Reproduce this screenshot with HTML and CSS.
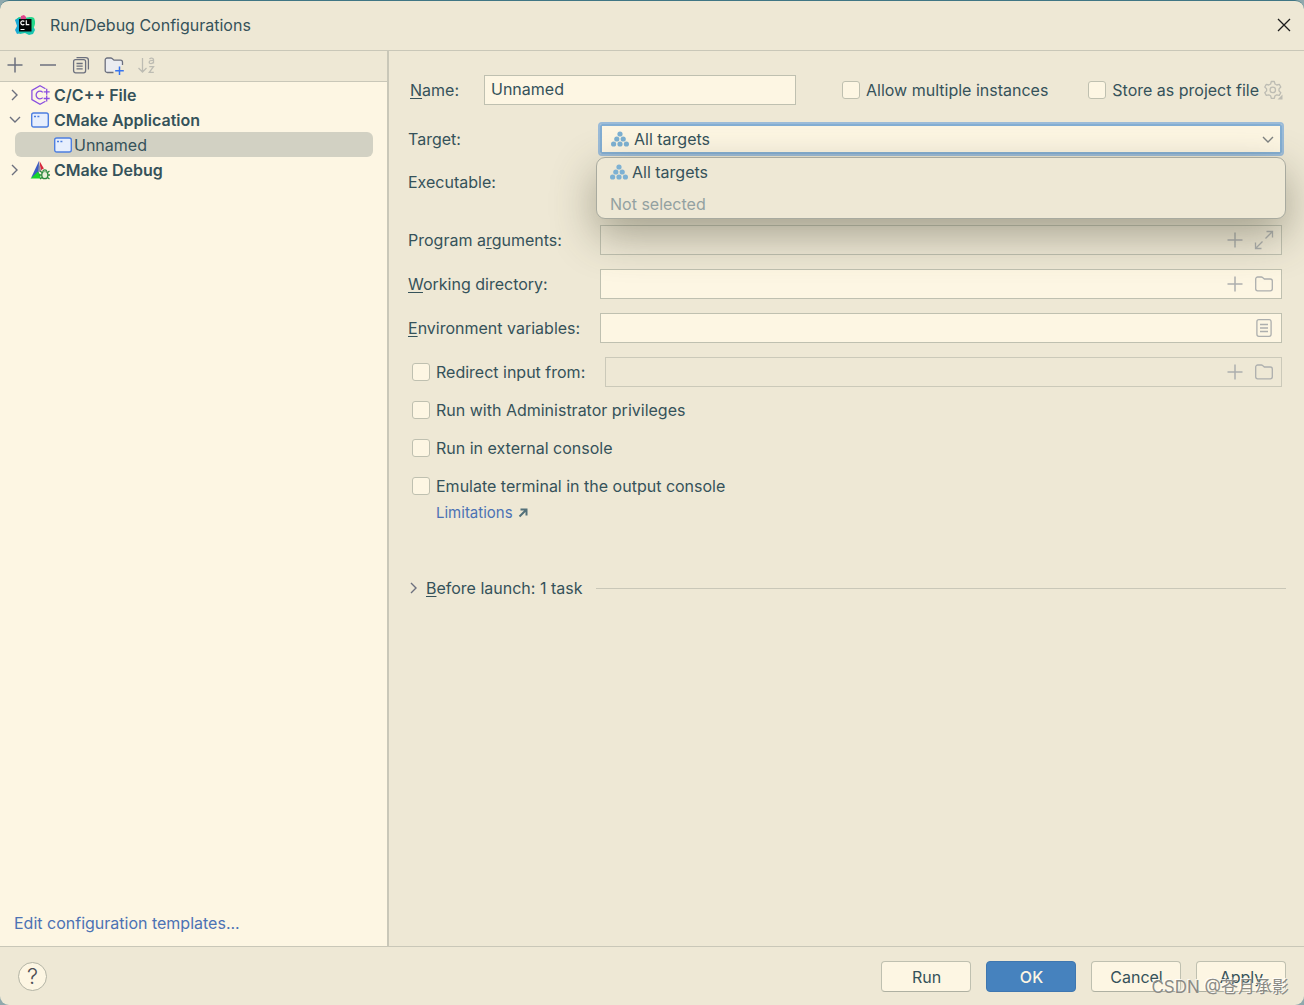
FILE: index.html
```html
<!DOCTYPE html>
<html lang="en">
<head>
<meta charset="utf-8">
<title>Run/Debug Configurations</title>
<link rel="stylesheet" href="styles.css">
</head>
<body>
<svg class="defs" aria-hidden="true">
  <symbol id="plus" viewBox="0 0 20 20"><path d="M10 2.500v15M2.500 10h15" fill="none" stroke="currentColor" stroke-width="1.500"/></symbol>
  <symbol id="folder" viewBox="0 0 20 20"><path d="M1.700 5a2 2 0 0 1 2-2h3.600a2 2 0 0 1 1.300.5L10.400 5h5.900a2 2 0 0 1 2 2v7.800a2 2 0 0 1-2 2H3.700a2 2 0 0 1-2-2z" fill="none" stroke="currentColor" stroke-width="1.300"/></symbol>
  <symbol id="chevron" viewBox="0 0 16 16"><path d="M5 3l5 5-5 5" fill="none" stroke="currentColor" stroke-width="1.400"/></symbol>
  <symbol id="window" viewBox="0 0 20 20"><rect x="1.700" y="3" width="16.600" height="14" rx="2" fill="#e7effd" stroke="#4e7fe0" stroke-width="1.400"/><path d="M4 6.500h2M7.400 6.500h2" stroke="#4e7fe0" stroke-width="1.500"/></symbol>
  <symbol id="targets" viewBox="0 0 20 20"><g fill="#7db1d3"><circle cx="10" cy="5" r="2.600"/><circle cx="6.800" cy="10" r="2.600"/><circle cx="13.200" cy="10" r="2.600"/><circle cx="3.600" cy="15" r="2.600"/><circle cx="10" cy="15" r="2.600"/><circle cx="16.400" cy="15" r="2.600"/></g></symbol>
</svg>
<div class="dialog">
  <header class="titlebar">
    <svg class="logo" viewBox="0 0 20 20">
      <path d="M0 5l4-3 5 1 6-1 4 1 1 4-1 5-9 1z" fill="#1fd08c"/>
      <path d="M6 1l3-1 2 2 0 4-6 1z" fill="#e0458c"/>
      <path d="M0 5l4-2 3 9-1 6-4 1-2-4 2-4z" fill="#19a9d6"/>
      <path d="M3 17l14-9 3 7-2 4-4 1-4-2-5 1z" fill="#18c5b0"/>
      <path d="M16 2l3 1 1 5-1 4-3 3z" fill="#25d88a"/>
      <rect x="4" y="4" width="12.500" height="12.500" fill="#050708"/>
      <path d="M9.300 6.500a2 2 0 1 0 0 2.600M11.300 5.200v4.500h3M5.500 14.500h4" fill="none" stroke="#fff" stroke-width="1.200"/>
    </svg>
    <h1 class="title">Run/Debug Configurations</h1>
    <button class="icon-button close" aria-label="Close"><svg viewBox="0 0 16 16"><path d="M2 2l12 12M14 2L2 14" fill="none" stroke="#1c1c1c" stroke-width="1.300"/></svg></button>
  </header>
  <div class="content">
    <aside class="sidebar">
      <div class="toolbar">
        <button class="icon-button" aria-label="Add"><svg class="icon"><use href="#plus"/></svg></button>
        <button class="icon-button" aria-label="Remove"><svg class="icon" viewBox="0 0 20 20"><path d="M2 10h16" stroke="currentColor" stroke-width="1.500"/></svg></button>
        <button class="icon-button" aria-label="Copy"><svg class="icon" viewBox="0 0 20 20" fill="none" stroke="currentColor" stroke-width="1.300"><path d="M5.500 2.600h9.300a2.600 2.600 0 0 1 2.600 2.600v9.300"/><rect x="2.600" y="4.600" width="12" height="13.200" rx="2"/><path d="M5.500 8.500h6.200M5.500 11.200h6.200M5.500 13.900h6.200"/></svg></button>
        <button class="icon-button" aria-label="New folder"><svg class="icon" viewBox="0 0 20 20"><path d="M9.500 17.500H3.200a2 2 0 0 1-2-2V5a2 2 0 0 1 2-2h3.600a2 2 0 0 1 1.300.5L10 5.200h6.500a2 2 0 0 1 2 2V10" fill="#ebecf0" stroke="currentColor" stroke-width="1.300"/><path d="M15.500 11.500v8.500M11.200 15.700h8.600" stroke="#3574f0" stroke-width="1.500"/></svg></button>
        <button class="icon-button" aria-label="Sort" disabled><svg class="icon" viewBox="0 0 20 20" fill="none" stroke="currentColor" stroke-width="1.300"><path d="M5.500 3v14M1.500 13l4 4 4-4M12.500 4c1-1.300 4-1.300 4 .6v4M16.500 5.500c-3-.2-4.300.3-4.300 1.700 0 1.800 3.300 1.800 4.300-.2M12.300 11.700h4.200l-4.200 5.600h4.500"/></svg></button>
      </div>
      <ul class="tree">
        <li class="node"><svg class="arrow"><use href="#chevron"/></svg><svg class="icon" viewBox="0 0 20 20" fill="none" stroke="#8a4fe0" stroke-width="1.300"><path d="M15.500 3.700L10 .8 1.900 5.400v9.200L10 19.200l5.500-3"/><path d="M12.700 7.400a3.800 3.800 0 1 0 0 5.200M13.700 6.800h6M16.700 3.800v6M13.700 13.500h6M16.700 10.500v6"/></svg><span class="group">C/C++ File</span></li>
        <li class="node"><svg class="arrow open"><use href="#chevron"/></svg><svg class="icon"><use href="#window"/></svg><span class="group">CMake Application</span></li>
        <li class="node child selected"><svg class="icon"><use href="#window"/></svg><span>Unnamed</span></li>
        <li class="node"><svg class="arrow"><use href="#chevron"/></svg><svg class="icon" viewBox="0 0 20 20"><path d="M9 1v12L1 18z" fill="#3a5bc4"/><path d="M9.500 1l5.500 9.500-4 2z" fill="#d6283b"/><path d="M.5 18.500L8 11.500l5 7z" fill="#17d42c"/><path d="M9 2l2 9-3 1.500z" fill="#8e8fa8"/><g fill="#fdf6e3" stroke="#fdf6e3" stroke-width="3"><rect x="11.800" y="10" width="6" height="9" rx="3"/></g><g fill="#e8efd9" stroke="#2c8a3e" stroke-width="1.300"><path d="M10 11l2 1.500M19.500 11l-2 1.500M9.300 15h2.500M20 15h-2.300M10 19l2-1.500M19.500 19l-2-1.500"/><rect x="11.800" y="11.300" width="6" height="7.400" rx="3"/><path d="M12.800 11.500c.3-2.300 3.700-2.300 4 0"/></g></svg><span class="group">CMake Debug</span></li>
      </ul>
      <a class="link templates" href="#">Edit configuration templates...</a>
    </aside>
    <main class="form">
      <div class="name-row">
        <label class="name-label" for="name"><u>N</u>ame:</label>
        <input class="field name" id="name" type="text" value="Unnamed">
        <label class="check"><input type="checkbox">Allow multiple instances</label>
        <div class="store">
          <label class="check"><input type="checkbox">Store as project file</label>
          <button class="icon-button muted" aria-label="Storage options"><svg class="icon" viewBox="0 0 20 20" fill="none" stroke="currentColor" stroke-width="1.300"><path d="M8.300 1.500h3l.7 2.500 1.800 1 2.500-.6 1.500 2.600-1.800 1.900v2l1.800 1.900-1.500 2.600-2.500-.6-1.800 1-.7 2.500h-3l-.7-2.500-1.800-1-2.500.6-1.500-2.600 1.800-1.900v-2L1.800 7l1.500-2.600 2.500.6 1.800-1z" stroke-linejoin="round"/><circle cx="9.800" cy="9.900" r="2.700"/><path d="M19.500 14.500v5h-5z" fill="currentColor" stroke="none"/></svg></button>
        </div>
      </div>
      <div class="row">
        <label for="target">Target:</label>
        <div class="combo">
          <select class="field" id="target"><option>All targets</option><option>Not selected</option></select>
          <svg class="icon combo-icon"><use href="#targets"/></svg>
          <svg class="combo-arrow"><use href="#chevron"/></svg>
          <ul class="popup" role="listbox" aria-label="Target">
            <li role="option"><svg class="icon"><use href="#targets"/></svg>All targets</li>
            <li class="none" role="option">Not selected</li>
          </ul>
        </div>
      </div>
      <div class="row executable"><span>Executable:</span></div>
      <div class="row">
        <label for="args">Program a<u>r</u>guments:</label>
        <div class="field box plain"><input id="args" type="text"><button class="icon-button" aria-label="Insert macro"><svg class="icon"><use href="#plus"/></svg></button><button class="icon-button" aria-label="Expand"><svg class="icon" viewBox="0 0 20 20"><path d="M11.500 8.500l7-7M12.500 1.500h6v6M8.500 11.500l-7 7M1.500 12.500v6h6" fill="none" stroke="currentColor" stroke-width="1.300"/></svg></button></div>
      </div>
      <div class="row">
        <label for="dir"><u>W</u>orking directory:</label>
        <div class="field box"><input id="dir" type="text"><button class="icon-button" aria-label="Insert macro"><svg class="icon"><use href="#plus"/></svg></button><button class="icon-button" aria-label="Browse"><svg class="icon"><use href="#folder"/></svg></button></div>
      </div>
      <div class="row">
        <label for="env"><u>E</u>nvironment variables:</label>
        <div class="field box"><input id="env" type="text"><button class="icon-button" aria-label="Edit variables"><svg class="icon" viewBox="0 0 20 20" fill="none" stroke="currentColor" stroke-width="1.300"><rect x="2.900" y="1.700" width="14.200" height="16.600" rx="2"/><path d="M6 6.500h8M6 10h8M6 13.500h8"/></svg></button></div>
      </div>
      <div class="row redirect">
        <label class="check"><input type="checkbox">Redirect input from:</label>
        <div class="field box off"><input type="text" aria-label="Input file" disabled><button class="icon-button" aria-label="Insert macro" disabled><svg class="icon"><use href="#plus"/></svg></button><button class="icon-button" aria-label="Browse" disabled><svg class="icon"><use href="#folder"/></svg></button></div>
      </div>
      <div class="options">
        <label class="check"><input type="checkbox">Run with Administrator privileges</label>
        <label class="check"><input type="checkbox">Run in external console</label>
        <label class="check"><input type="checkbox">Emulate terminal in the output console</label>
      </div>
      <a class="link limits" href="#">Limitations <svg viewBox="0 0 10 10"><path d="M2.500 1.500h6v6M8 2L1.500 8.500" fill="none" stroke="#53707a" stroke-width="2"/></svg></a>
      <button class="before"><svg class="arrow"><use href="#chevron"/></svg><span><u>B</u>efore launch: 1 task</span></button>
    </main>
  </div>
  <footer class="footer">
    <button class="help" aria-label="Help">?</button>
    <button class="button">Run</button>
    <button class="button primary">OK</button>
    <button class="button">Cancel</button>
    <button class="button">Apply</button>
  </footer>
  <div class="watermark">CSDN @苍月承影</div>
</div>
</body>
</html>
```
FILE: styles.css
```css
* { box-sizing: border-box; }
body {
  margin: 0;
  background: #8fa9ad;
  color: #35525a;
  font: 16px/20px Inter, "Noto Sans CJK SC", sans-serif;
}
button, input, select { font: inherit; color: inherit; }
ul { list-style: none; margin: 0; padding: 0; }
u { text-underline-offset: 2px; text-decoration-thickness: 1px; }
.defs { position: absolute; width: 0; height: 0; }
.icon { width: 20px; height: 20px; flex: none; display: block; }
.icon-button {
  display: flex;
  padding: 0;
  border: 0;
  background: none;
  color: #6c707e;
}
.dialog {
  position: relative;
  display: flex;
  flex-direction: column;
  min-height: 100vh;
  background: #eee8d5;
  border-top: 1px solid #3f7684;
  border-radius: 9px;
  overflow: hidden;
}
.titlebar {
  display: flex;
  align-items: center;
  height: 50px;
  padding: 0 12px 2px 15px;
  border-bottom: 1px solid #c9c7b8;
}
.logo { width: 20px; height: 20px; margin-right: 15px; }
.title { flex: 1; margin: 0; font-size: 16px; font-weight: 400; }
.close svg { width: 16px; height: 16px; }
.content { flex: 1; display: flex; }
.sidebar {
  display: flex;
  flex-direction: column;
  flex: 0 0 389px;
  background: #fdf6e3;
  border-right: 2px solid #c9c7b8;
}
.toolbar {
  display: flex;
  align-items: center;
  gap: 13px;
  height: 31px;
  padding: 0 0 2px 5px;
  background: #eee8d5;
  border-bottom: 1px solid #c9c7b8;
}
.toolbar .icon-button:disabled { color: #bdbcb3; }
.tree { flex: 1; }
.node {
  display: flex;
  align-items: center;
  height: 25px;
  padding-left: 7px;
}
.node .icon { margin-right: 4px; }
.node .arrow { margin-right: 7px; }
.child { margin: 0 14px 0 15px; padding-left: 38px; }
.child .icon { margin-right: 1px; }
.selected { background: #d2d1c3; border-radius: 6px; }
.group { font-weight: 600; }
.arrow { width: 16px; height: 16px; color: #6c707e; flex: none; }
.open { transform: rotate(90deg); }
.link { color: #4c72b4; text-decoration: none; }
.templates { padding: 0 14px 13px; }
.form {
  flex: 1;
  min-width: 0;
  display: flex;
  flex-direction: column;
  gap: 14px;
  padding: 24px 22px 24px 19px;
}
.field {
  height: 30px;
  background: #fdf6e3;
  border: 1px solid #bfc0b0;
  border-radius: 0;
}
.name-row {
  display: flex;
  align-items: center;
  margin: 0 -1px 5px 2px;
}
.name-label { width: 74px; }
.name { flex: 0 1 312px; min-width: 0; padding: 0 6px 2px; margin-right: 46px; }
.store { display: flex; align-items: center; gap: 4px; margin-left: auto; }
.check { display: flex; align-items: center; gap: 6px; height: 24px; white-space: nowrap; }
.check input {
  appearance: none;
  width: 18px;
  height: 18px;
  margin: 0;
  background: #fdf6e3;
  border: 1px solid #bfc0b0;
  border-radius: 3px;
}
.muted { color: #bdbcb3; }
.row { display: grid; grid-template-columns: 192px 1fr; align-items: center; min-height: 30px; }
.executable { min-height: 28px; margin-bottom: 15px; }
.combo { position: relative; }
.combo select {
  display: block;
  width: 100%;
  padding: 0 32px 0 32px;
  appearance: none;
  border: 2px solid #83aed3;
  outline: 2px solid #9bbbd8;
  border-radius: 2px;
}
.combo-icon { position: absolute; left: 10px; top: 5px; }
.combo-arrow {
  position: absolute;
  right: 6px;
  top: 8px;
  width: 16px;
  height: 16px;
  color: #7e8282;
  transform: rotate(90deg);
}
.popup {
  position: absolute;
  z-index: 1;
  top: 33px;
  left: -4px;
  right: -4px;
  background: #eee8d5;
  border: 1px solid #a8aa9f;
  border-radius: 9px;
  box-shadow: 0 16px 44px rgba(70, 70, 50, 0.45);
}
.popup li { display: flex; align-items: center; gap: 3px; height: 30px; padding: 0 12px 2px; }
.popup .none { padding: 2px 13px 0; color: #93a1a1; }
.box { display: flex; align-items: center; gap: 9px; padding-right: 7px; }
.box input { flex: 1; min-width: 0; border: 0; background: none; }
.box .icon-button { color: #adafae; }
.plain { background: #f0ead8; }
.off { background: none; border-color: #cbc9b9; }
.redirect { grid-template-columns: 193px 1fr; padding-left: 4px; }
.options { display: flex; flex-direction: column; align-items: flex-start; gap: 14px; margin: -3px 0 0 4px; }
.limits { margin: -9px 0 0 28px; font-size: 15px; }
.limits svg { width: 10px; height: 10px; margin-left: 1px; }
.before {
  display: flex;
  align-items: center;
  gap: 4px;
  margin: 41px -4px 0 -2px;
  padding: 0;
  border: 0;
  background: none;
}
.before::after { content: ""; flex: 1; height: 1px; margin-left: 10px; background: #c9c7b8; }
.footer {
  display: flex;
  align-items: center;
  gap: 15px;
  height: 59px;
  padding: 0 18px;
  border-top: 1px solid #c9c7b8;
}
.help {
  width: 29px;
  height: 29px;
  margin-right: auto;
  padding: 0;
  background: #fdf6e3;
  border: 1px solid #b3b4a5;
  border-radius: 50%;
  font-size: 22px;
  font-weight: 300;
  color: #4d4f55;
}
.button {
  width: 90px;
  height: 31px;
  padding: 1px 0 0 1px;
  background: #fdf6e3;
  border: 1px solid #bfc0b0;
  border-bottom-color: #aeb0a2;
  border-radius: 4px;
}
.primary { background: #4682be; border-color: #3f77b0; color: #fdf6e3; font-weight: 500; }
.watermark {
  position: absolute;
  right: 15px;
  bottom: 8px;
  font-size: 17px;
  color: #8b8b86;
  text-shadow: -1px -1px 0 rgba(255, 255, 255, 0.8);
  pointer-events: none;
}
```
